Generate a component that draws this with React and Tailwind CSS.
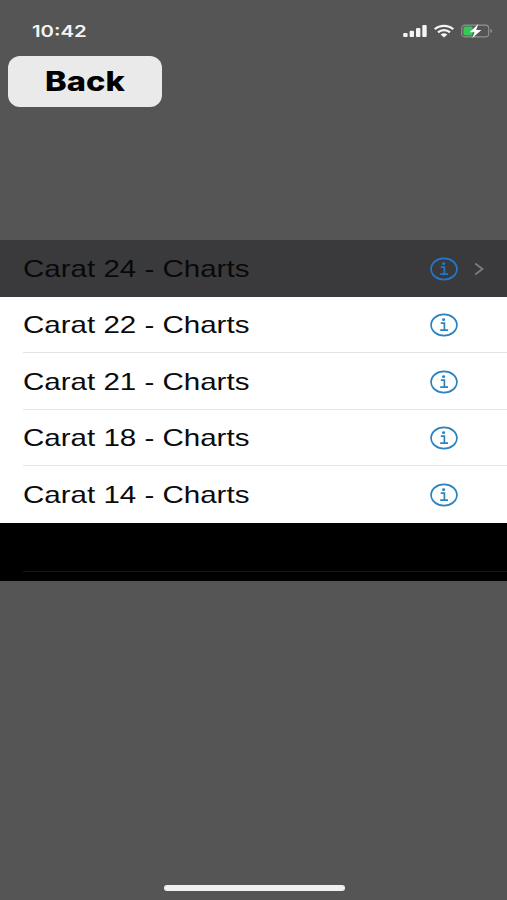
import clsx from "clsx";

const carats = [24, 22, 21, 18, 14];

const InfoIcon = () => (
  <svg
    width="30"
    height="24"
    viewBox="0 0 30 24"
    fill="none"
    stroke="currentColor"
    strokeWidth="1.7"
  >
    <ellipse cx="15" cy="12" rx="12.9" ry="10.6" />
    <ellipse cx="14.6" cy="6.7" rx="1.6" ry="1.4" fill="currentColor" stroke="none" />
    <path d="M11.8 10.2h3.6v6.8M11.2 17.1h7.8" />
  </svg>
);

const StatusBar = () => (
  <div className="flex h-[56px] items-start justify-between pt-[20px] pr-[14.5px] pl-[32px] text-[#f4f4f4]">
    <span className="origin-left scale-x-[1.27] font-[Inter,sans-serif] text-[16px] leading-[22px] font-semibold">
      10:42
    </span>
    <div className="flex h-[22px] items-center">
      <svg width="24" height="14" viewBox="0 0 24 14" fill="currentColor">
        <rect x="0.2" y="9" width="4.4" height="4" rx="1" />
        <rect x="6.6" y="6.8" width="4.4" height="6.2" rx="1" />
        <rect x="13" y="4" width="4.4" height="9" rx="1" />
        <rect x="19.3" y="1" width="4.4" height="12" rx="1" />
      </svg>
      <svg
        className="ml-[7px]"
        width="20"
        height="14"
        viewBox="0 0 20 14"
        fill="none"
        stroke="currentColor"
        strokeWidth="2.2"
      >
        <path d="M0.7 5.3C5.8 0.6 14.2 0.6 19.3 5.3" />
        <path d="M4 8.4C7.3 5.4 12.7 5.4 16 8.4" />
        <path d="M6.6 10.4Q10 7.9 13.4 10.4L10 13.4Z" fill="currentColor" stroke="none" />
      </svg>
      <svg className="ml-[7px]" width="32" height="14" viewBox="0 0 32 14">
        <rect x="0.7" y="1.1" width="27" height="11.8" rx="3.2" fill="none" stroke="#929292" strokeWidth="1.1" />
        <path d="M29.3 5v4c2.2-.6 2.2-3.4 0-4z" fill="#929292" />
        <path d="M4 2.6h7.5v8.8H4a1.6 1.6 0 0 1-1.6-1.6V4.2A1.6 1.6 0 0 1 4 2.6z" fill="#35c759" />
        <path d="M17.3 0L8.6 8.2h4.9l-2.1 5.8L20.4 6h-5.2z" fill="#fff" />
      </svg>
    </div>
  </div>
);

const Row = ({ carat, selected, last }) => (
  <div
    className={clsx(
      "flex h-[56.5px] pl-[23px]",
      selected ? "bg-[#3a3a3c] text-[#09090a]" : "bg-white text-[#0b0b0b]"
    )}
  >
    <div
      className={clsx(
        "flex flex-1 items-center justify-between border-b pt-[1.5px]",
        selected || last ? "border-transparent" : "border-[#e4e4e4]"
      )}
    >
      <span className="origin-left scale-x-[1.23] text-[24px] leading-[28px] whitespace-nowrap">
        Carat {carat} - Charts
      </span>
      <div
        className={clsx(
          "flex w-[78px] items-center",
          selected ? "text-[#2478c8]" : "text-[#2b83c2]"
        )}
      >
        <InfoIcon />
        {selected && (
          <svg
            className="ml-[15px]"
            width="12"
            height="14"
            viewBox="0 0 12 14"
            fill="none"
            stroke="#7c7c7f"
            strokeWidth="1.8"
          >
            <path d="M1.2 1.5L8.5 7L1.2 12.5" />
          </svg>
        )}
      </div>
    </div>
  </div>
);

const App = () => {
  return (
    <main className="flex h-[900px] w-[507px] flex-col overflow-hidden bg-[#555555] font-['Liberation_Sans',Arial,sans-serif]">
      <StatusBar />
      <button className="ml-[7.5px] flex h-[51px] w-[154px] items-center justify-center rounded-[12px] bg-[#eaeaea] text-black">
        <span className="scale-x-[1.21] font-[Inter,sans-serif] text-[27px] leading-[32px] font-extrabold">
          Back
        </span>
      </button>

      <section className="mt-[133px]">
        {carats.map((carat, i) => (
          <Row
            key={carat}
            carat={carat}
            selected={i === 0}
            last={i === carats.length - 1}
          />
        ))}
        <div className="h-[58.5px] bg-black pt-[48px] pl-[23px]">
          <div className="h-px bg-[#181818]" />
        </div>
      </section>

      <div className="mt-auto mb-[9px] ml-[163.5px] h-[6px] w-[181px] rounded-full bg-[#f0f0f0]" />
    </main>
  );
};

export default App;
